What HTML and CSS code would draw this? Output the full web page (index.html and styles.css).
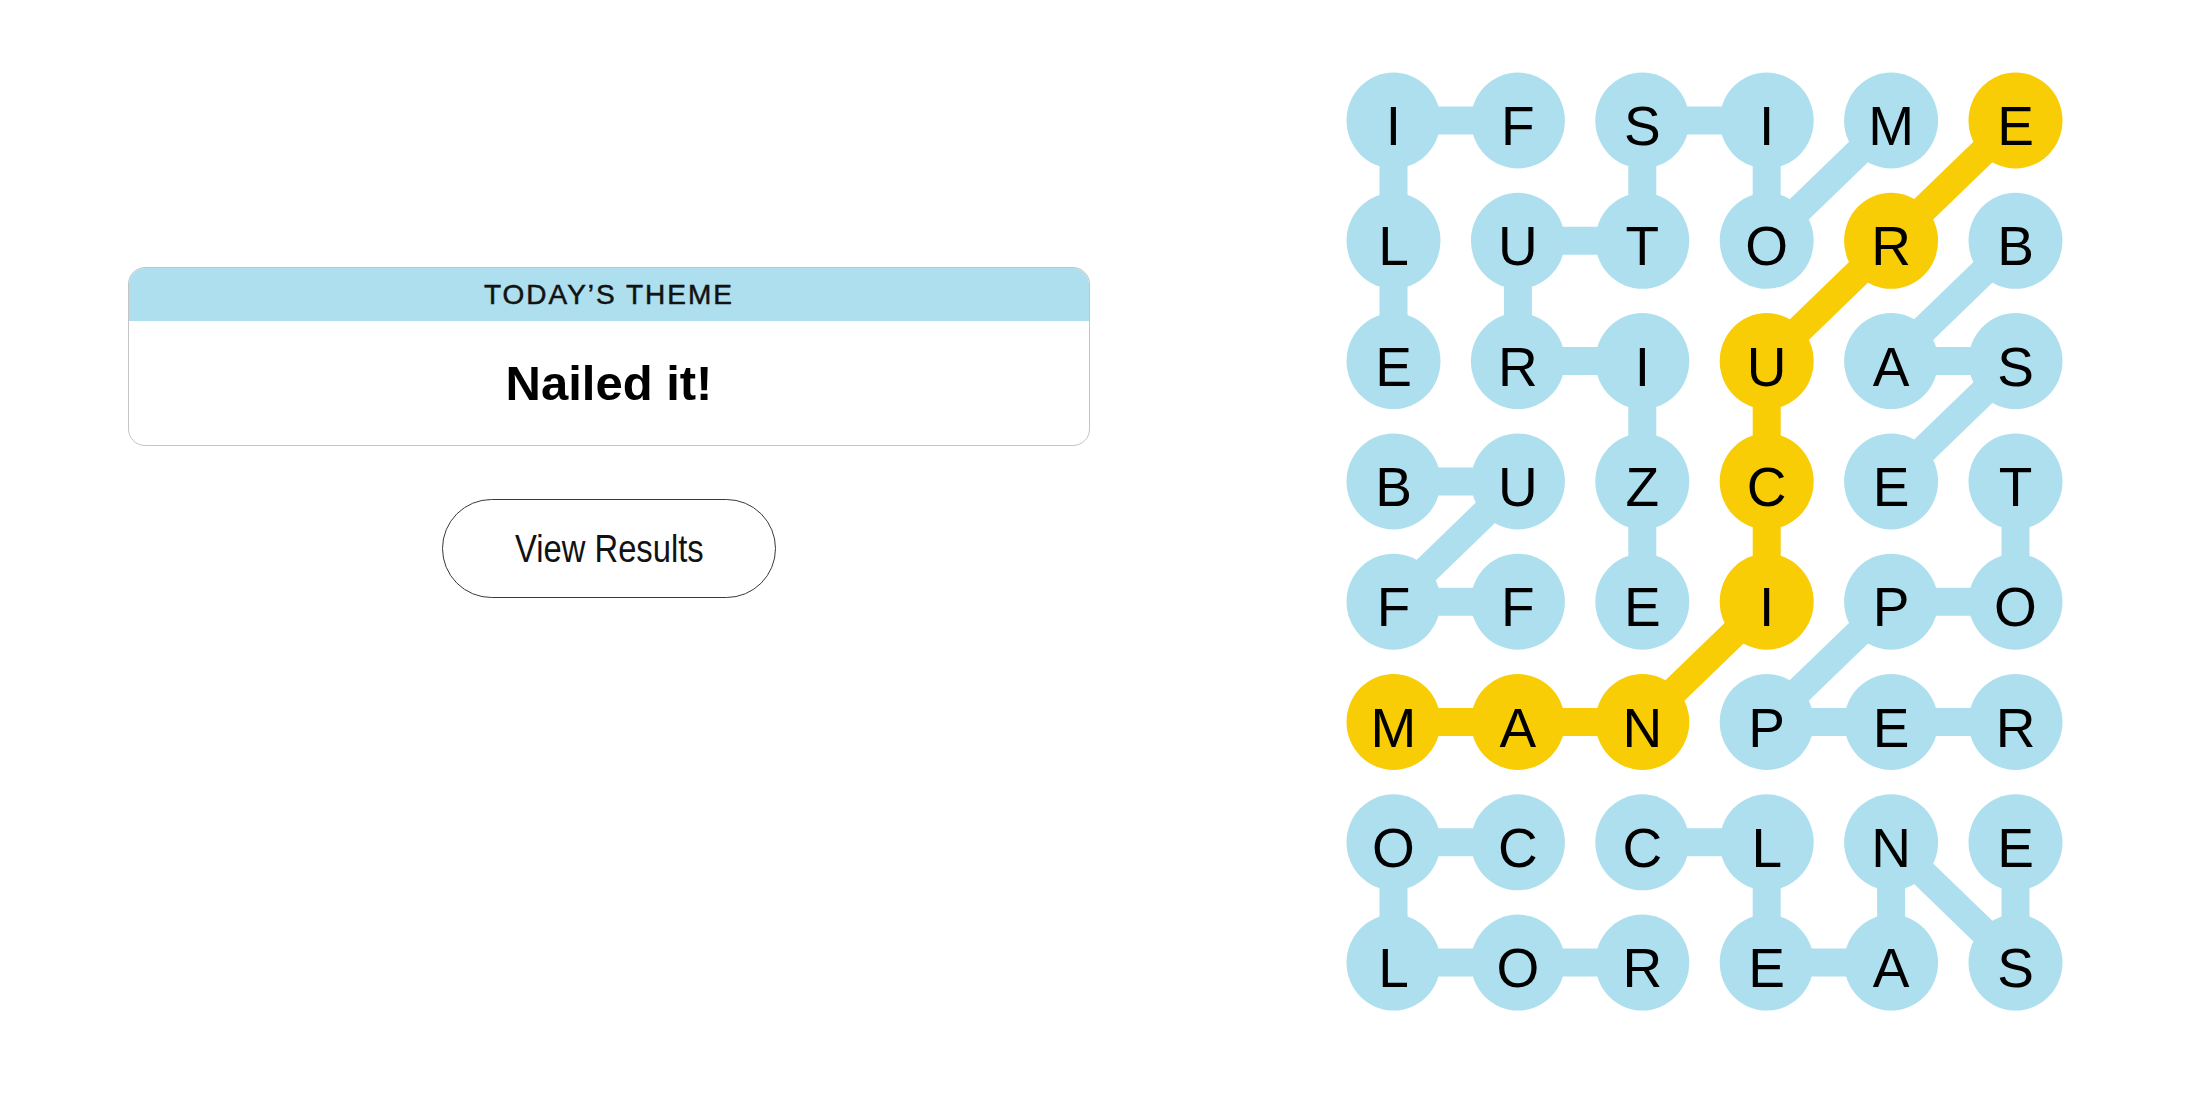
FILE: index.html
```html
<!DOCTYPE html>
<html lang="en">
<head>
<meta charset="utf-8">
<title>Strands</title>
<link rel="stylesheet" href="styles.css">
</head>
<body>
<main class="page">
  <section class="left">
    <div class="theme-card">
      <div class="theme-head">TODAY’S THEME</div>
      <div class="theme-body">Nailed it!</div>
    </div>
    <button class="results-btn" type="button"><span class="btn-label">View Results</span></button>
  </section>
  <section class="right">
    <svg class="board" width="730" height="950" viewBox="0 0 730 950" xmlns="http://www.w3.org/2000/svg">
      <g class="links-blue" stroke="#aedfee" stroke-width="28" stroke-linecap="butt">
        <line x1="53.5" y1="54.5" x2="177.9" y2="54.5"/>
        <line x1="53.5" y1="54.5" x2="53.5" y2="174.8"/>
        <line x1="53.5" y1="174.8" x2="53.5" y2="295.1"/>
        <line x1="302.3" y1="54.5" x2="426.7" y2="54.5"/>
        <line x1="302.3" y1="54.5" x2="302.3" y2="174.8"/>
        <line x1="426.7" y1="54.5" x2="426.7" y2="174.8"/>
        <line x1="426.7" y1="174.8" x2="551.1" y2="54.5"/>
        <line x1="302.3" y1="174.8" x2="177.9" y2="174.8"/>
        <line x1="177.9" y1="174.8" x2="177.9" y2="295.1"/>
        <line x1="177.9" y1="295.1" x2="302.3" y2="295.1"/>
        <line x1="302.3" y1="295.1" x2="302.3" y2="415.4"/>
        <line x1="302.3" y1="415.4" x2="302.3" y2="535.7"/>
        <line x1="675.5" y1="174.8" x2="551.1" y2="295.1"/>
        <line x1="551.1" y1="295.1" x2="675.5" y2="295.1"/>
        <line x1="675.5" y1="295.1" x2="551.1" y2="415.4"/>
        <line x1="675.5" y1="415.4" x2="675.5" y2="535.7"/>
        <line x1="675.5" y1="535.7" x2="551.1" y2="535.7"/>
        <line x1="551.1" y1="535.7" x2="426.7" y2="656.0"/>
        <line x1="426.7" y1="656.0" x2="551.1" y2="656.0"/>
        <line x1="551.1" y1="656.0" x2="675.5" y2="656.0"/>
        <line x1="53.5" y1="415.4" x2="177.9" y2="415.4"/>
        <line x1="177.9" y1="415.4" x2="53.5" y2="535.7"/>
        <line x1="53.5" y1="535.7" x2="177.9" y2="535.7"/>
        <line x1="53.5" y1="776.3" x2="177.9" y2="776.3"/>
        <line x1="53.5" y1="776.3" x2="53.5" y2="896.6"/>
        <line x1="53.5" y1="896.6" x2="177.9" y2="896.6"/>
        <line x1="177.9" y1="896.6" x2="302.3" y2="896.6"/>
        <line x1="302.3" y1="776.3" x2="426.7" y2="776.3"/>
        <line x1="426.7" y1="776.3" x2="426.7" y2="896.6"/>
        <line x1="426.7" y1="896.6" x2="551.1" y2="896.6"/>
        <line x1="551.1" y1="896.6" x2="551.1" y2="776.3"/>
        <line x1="551.1" y1="776.3" x2="675.5" y2="896.6"/>
        <line x1="675.5" y1="896.6" x2="675.5" y2="776.3"/>
      </g>
      <g class="links-gold" stroke="#f8cd05" stroke-width="28" stroke-linecap="butt">
        <line x1="675.5" y1="54.5" x2="551.1" y2="174.8"/>
        <line x1="551.1" y1="174.8" x2="426.7" y2="295.1"/>
        <line x1="426.7" y1="295.1" x2="426.7" y2="415.4"/>
        <line x1="426.7" y1="415.4" x2="426.7" y2="535.7"/>
        <line x1="426.7" y1="535.7" x2="302.3" y2="656.0"/>
        <line x1="302.3" y1="656.0" x2="177.9" y2="656.0"/>
        <line x1="177.9" y1="656.0" x2="53.5" y2="656.0"/>
      </g>
      <g class="nodes" fill="#aedfee">
        <ellipse cx="53.5" cy="54.5" rx="47" ry="48"/><ellipse cx="177.9" cy="54.5" rx="47" ry="48"/><ellipse cx="302.3" cy="54.5" rx="47" ry="48"/><ellipse cx="426.7" cy="54.5" rx="47" ry="48"/><ellipse cx="551.1" cy="54.5" rx="47" ry="48"/>
        <ellipse cx="53.5" cy="174.8" rx="47" ry="48"/><ellipse cx="177.9" cy="174.8" rx="47" ry="48"/><ellipse cx="302.3" cy="174.8" rx="47" ry="48"/><ellipse cx="426.7" cy="174.8" rx="47" ry="48"/><ellipse cx="675.5" cy="174.8" rx="47" ry="48"/>
        <ellipse cx="53.5" cy="295.1" rx="47" ry="48"/><ellipse cx="177.9" cy="295.1" rx="47" ry="48"/><ellipse cx="302.3" cy="295.1" rx="47" ry="48"/><ellipse cx="551.1" cy="295.1" rx="47" ry="48"/><ellipse cx="675.5" cy="295.1" rx="47" ry="48"/>
        <ellipse cx="53.5" cy="415.4" rx="47" ry="48"/><ellipse cx="177.9" cy="415.4" rx="47" ry="48"/><ellipse cx="302.3" cy="415.4" rx="47" ry="48"/><ellipse cx="551.1" cy="415.4" rx="47" ry="48"/><ellipse cx="675.5" cy="415.4" rx="47" ry="48"/>
        <ellipse cx="53.5" cy="535.7" rx="47" ry="48"/><ellipse cx="177.9" cy="535.7" rx="47" ry="48"/><ellipse cx="302.3" cy="535.7" rx="47" ry="48"/><ellipse cx="551.1" cy="535.7" rx="47" ry="48"/><ellipse cx="675.5" cy="535.7" rx="47" ry="48"/>
        <ellipse cx="426.7" cy="656.0" rx="47" ry="48"/><ellipse cx="551.1" cy="656.0" rx="47" ry="48"/><ellipse cx="675.5" cy="656.0" rx="47" ry="48"/>
        <ellipse cx="53.5" cy="776.3" rx="47" ry="48"/><ellipse cx="177.9" cy="776.3" rx="47" ry="48"/><ellipse cx="302.3" cy="776.3" rx="47" ry="48"/><ellipse cx="426.7" cy="776.3" rx="47" ry="48"/><ellipse cx="551.1" cy="776.3" rx="47" ry="48"/><ellipse cx="675.5" cy="776.3" rx="47" ry="48"/>
        <ellipse cx="53.5" cy="896.6" rx="47" ry="48"/><ellipse cx="177.9" cy="896.6" rx="47" ry="48"/><ellipse cx="302.3" cy="896.6" rx="47" ry="48"/><ellipse cx="426.7" cy="896.6" rx="47" ry="48"/><ellipse cx="551.1" cy="896.6" rx="47" ry="48"/><ellipse cx="675.5" cy="896.6" rx="47" ry="48"/>
      </g>
      <g class="nodes-gold" fill="#f8cd05">
        <ellipse cx="675.5" cy="54.5" rx="47" ry="48"/>
        <ellipse cx="551.1" cy="174.8" rx="47" ry="48"/>
        <ellipse cx="426.7" cy="295.1" rx="47" ry="48"/>
        <ellipse cx="426.7" cy="415.4" rx="47" ry="48"/>
        <ellipse cx="426.7" cy="535.7" rx="47" ry="48"/>
        <ellipse cx="302.3" cy="656.0" rx="47" ry="48"/>
        <ellipse cx="177.9" cy="656.0" rx="47" ry="48"/>
        <ellipse cx="53.5" cy="656.0" rx="47" ry="48"/>
      </g>
      <g class="letters" text-anchor="middle">
        <text x="53.5" y="79">I</text><text x="177.9" y="79">F</text><text x="302.3" y="79">S</text><text x="426.7" y="79">I</text><text x="551.1" y="79">M</text><text x="675.5" y="79">E</text>
        <text x="53.5" y="199.3">L</text><text x="177.9" y="199.3">U</text><text x="302.3" y="199.3">T</text><text x="426.7" y="199.3">O</text><text x="551.1" y="199.3">R</text><text x="675.5" y="199.3">B</text>
        <text x="53.5" y="319.6">E</text><text x="177.9" y="319.6">R</text><text x="302.3" y="319.6">I</text><text x="426.7" y="319.6">U</text><text x="551.1" y="319.6">A</text><text x="675.5" y="319.6">S</text>
        <text x="53.5" y="439.9">B</text><text x="177.9" y="439.9">U</text><text x="302.3" y="439.9">Z</text><text x="426.7" y="439.9">C</text><text x="551.1" y="439.9">E</text><text x="675.5" y="439.9">T</text>
        <text x="53.5" y="560.2">F</text><text x="177.9" y="560.2">F</text><text x="302.3" y="560.2">E</text><text x="426.7" y="560.2">I</text><text x="551.1" y="560.2">P</text><text x="675.5" y="560.2">O</text>
        <text x="53.5" y="680.5">M</text><text x="177.9" y="680.5">A</text><text x="302.3" y="680.5">N</text><text x="426.7" y="680.5">P</text><text x="551.1" y="680.5">E</text><text x="675.5" y="680.5">R</text>
        <text x="53.5" y="800.8">O</text><text x="177.9" y="800.8">C</text><text x="302.3" y="800.8">C</text><text x="426.7" y="800.8">L</text><text x="551.1" y="800.8">N</text><text x="675.5" y="800.8">E</text>
        <text x="53.5" y="921.1">L</text><text x="177.9" y="921.1">O</text><text x="302.3" y="921.1">R</text><text x="426.7" y="921.1">E</text><text x="551.1" y="921.1">A</text><text x="675.5" y="921.1">S</text>
      </g>
    </svg>
  </section>
</main>
</body>
</html>
```

FILE: styles.css
```css
html, body {
  margin: 0;
  padding: 0;
  background: #ffffff;
}

body {
  font-family: "Liberation Sans", Arial, sans-serif;
  color: #000000;
}

.page {
  display: flex;
  flex-direction: row;
  width: 2200px;
  height: 1100px;
}

.left {
  width: 1218px;
  flex: 0 0 1218px;
  display: flex;
  flex-direction: column;
  align-items: center;
  padding-top: 267px;
  box-sizing: border-box;
}

.theme-card {
  width: 962px;
  box-sizing: border-box;
  border: 1.5px solid #c4c4c4;
  border-radius: 17px;
  overflow: hidden;
  background: #ffffff;
}

.theme-head {
  background: #aedfee;
  height: 53px;
  display: flex;
  align-items: center;
  justify-content: center;
  font-size: 28px;
  letter-spacing: 2px;
  color: #121212;
  -webkit-text-stroke: 0.5px #121212;
}

.theme-body {
  height: 124px;
  display: flex;
  align-items: center;
  justify-content: center;
  font-size: 49px;
  font-weight: 700;
  color: #000000;
}

.results-btn {
  margin-top: 53px;
  width: 334px;
  height: 99px;
  border: 1.5px solid #3a3a3a;
  border-radius: 50px;
  background: #ffffff;
  font-family: "Liberation Sans", Arial, sans-serif;
  font-size: 39px;
  color: #121212;
  padding: 0;
  cursor: pointer;
  display: flex;
  align-items: center;
  justify-content: center;
}

.btn-label {
  display: inline-block;
  transform: scaleX(0.84);
}

.right {
  flex: 1 1 auto;
  padding-top: 66px;
  padding-left: 122px;
  box-sizing: border-box;
}

.board {
  display: block;
}

.letters {
  font-family: "Liberation Sans", Arial, sans-serif;
  font-size: 55px;
  fill: #000000;
}
```
